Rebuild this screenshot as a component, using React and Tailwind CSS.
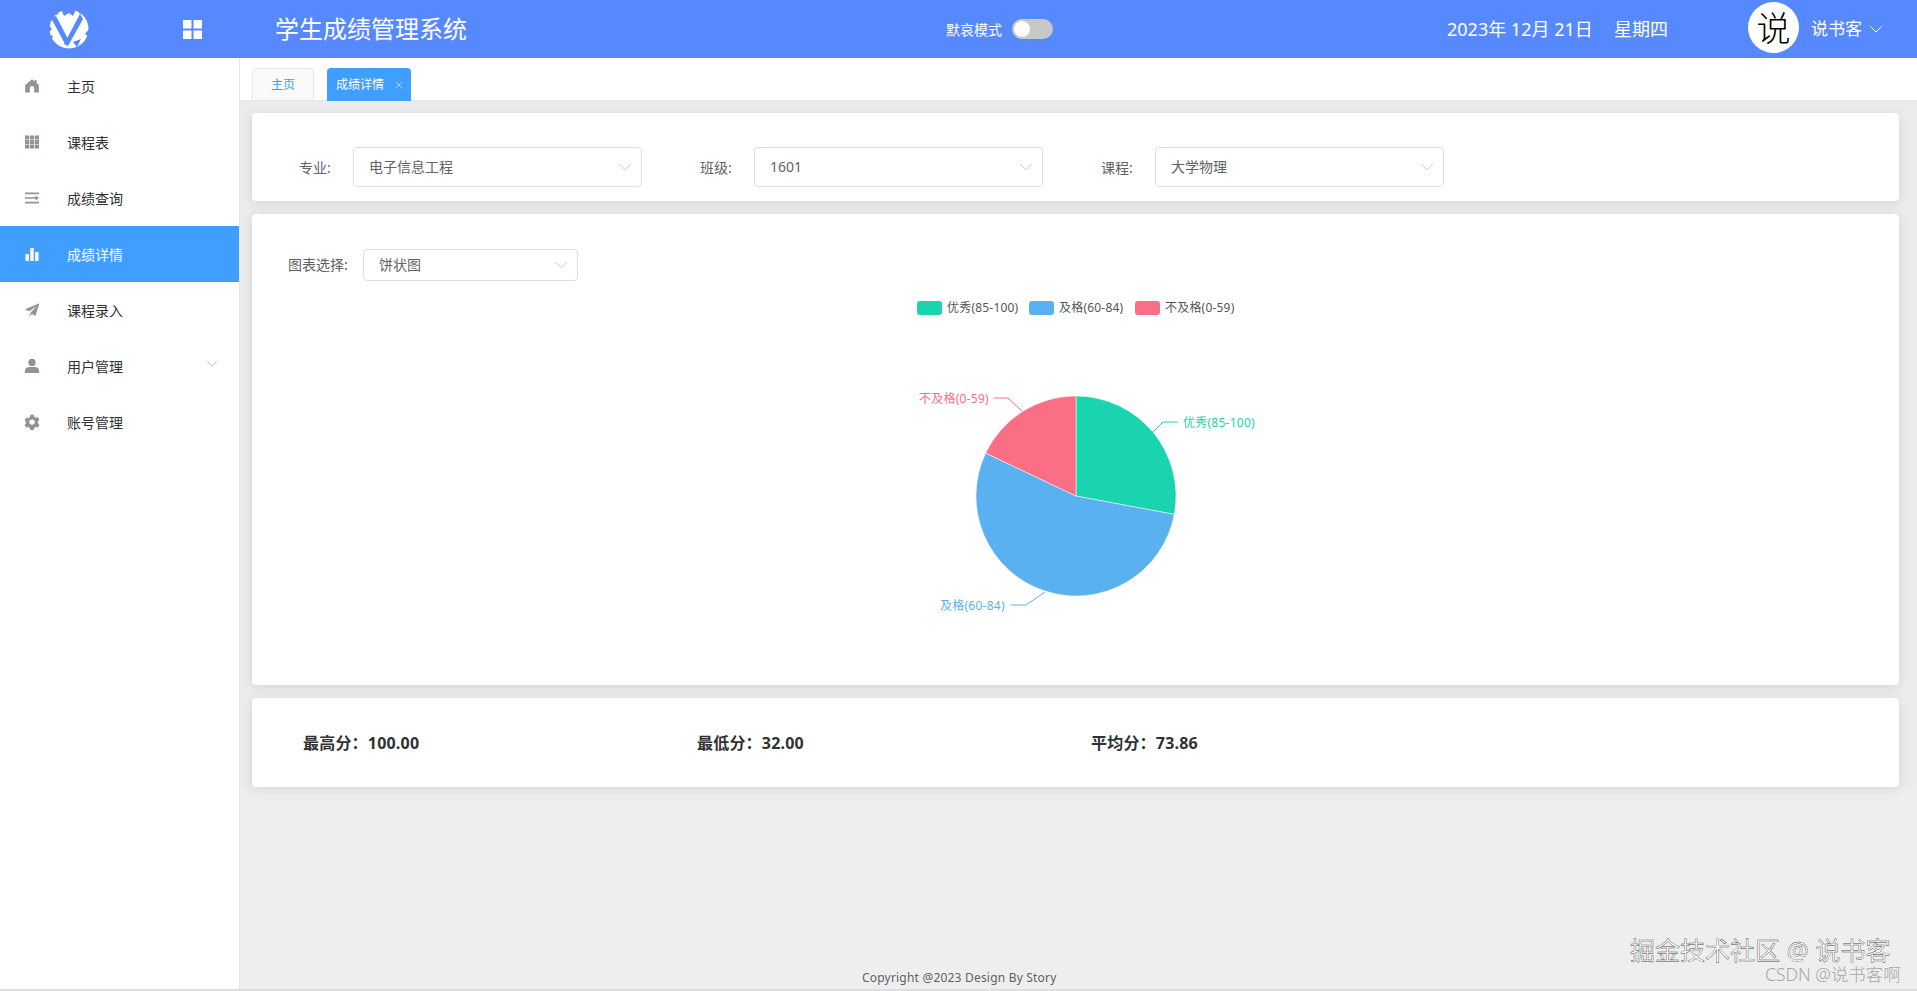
import React from 'react';
import { ChevronDown, X } from 'lucide-react';

const FONT = "font-['Noto_Sans','Noto_Sans_CJK_SC',sans-serif]";

const icons = {
  home: <path d="M8 1.2 1.2 7v7.6h4.6v-4.4a2.2 2.2 0 0 1 4.4 0v4.4h4.6V7L12.6 5V2h-1.8v1.5L8 1.2Z" />,
  grid: (
    <path d="M1 1.6h4.2v4H1zM5.9 1.6h4.2v4H5.9zM10.8 1.6H15v4h-4.2zM1 6.1h4.2v4H1zM5.9 6.1h4.2v4H5.9zM10.8 6.1H15v4h-4.2zM1 10.6h4.2v4H1zM5.9 10.6h4.2v4H5.9zM10.8 10.6H15v4h-4.2z" />
  ),
  list: (
    <path d="M1 2.6h14v1.6H1zM1 7.2h10.6V5.6L15 8l-3.4 2.4V8.8H1zM1 11.8h14v1.6H1z" />
  ),
  chart: <path d="M1.5 8h3.4v7H1.5zM6.3 2h3.4v13H6.3zM11.1 6h3.4v9h-3.4z" />,
  plane: <path d="M15.4 1.2 1 7.2l4.2 2.1 7.6-5.4-5.9 6.3v.1l-2 4.5 3.2-2.7 3.3 1.8 4-12.7Z" />,
  user: (
    <>
      <circle cx="8" cy="4.4" r="3.6" />
      <path d="M1 15v-2.4C1 10.2 3 9 5 9h6c2 0 4 1.2 4 3.6V15H1Z" />
    </>
  ),
  gear: (
    <path
      fillRule="evenodd"
      d="m6.3.8 3.4 0 .5 2 1.5.9 2-.6 1.7 3-1.5 1.4v1.8l1.5 1.4-1.7 3-2-.6-1.5.9-.5 2H6.3l-.5-2-1.5-.9-2 .6-1.7-3 1.5-1.4V8l-1.5-1.4 1.7-3 2 .6 1.5-.9.5-2ZM8 5.4a2.7 2.7 0 1 0 0 5.4 2.7 2.7 0 0 0 0-5.4Z"
    />
  ),
};

const menu = [
  ['home', '主页'],
  ['grid', '课程表'],
  ['list', '成绩查询'],
  ['chart', '成绩详情', true],
  ['plane', '课程录入'],
  ['user', '用户管理', false, true],
  ['gear', '账号管理'],
];

function Logo() {
  return (
    <svg viewBox="0 0 40 40" className="w-10 h-10 shrink-0">
      <circle cx="20" cy="20" r="19.5" fill="#fff" />
      <g fill="#5789fe">
        <path d="M2 9 7 7 19 30 16 35 Z" />
        <path d="M31 5 34 10 19 37 15 35 Z" />
        <path d="M12 0 27 0 24 7 20 4 15 7 Z" />
        <path d="M7 1 9 6 3 5 Z" />
        <path d="M32 0 30 5 37 4 Z" />
        <path d="M0 17 3 20 0 23 Z" />
        <path d="M0 26 4 27 2 32 Z" />
        <path d="M40 20 36 25 40 28 Z" />
        <path d="M24 33 32 30 28 38 Z" />
      </g>
    </svg>
  );
}

function Select({ value, className }) {
  return (
    <div className={`flex items-center justify-between bg-white border border-[#dcdfe6] rounded-[4px] pl-[15px] pr-[5px] text-[14px] text-[#606266] ${className}`}>
      <span className="mb-[2px]">{value}</span>
      <ChevronDown size={22} strokeWidth={0.8} className="text-[#b4b8bf]" />
    </div>
  );
}

function polar(deg, r = 100) {
  const a = ((deg - 90) * Math.PI) / 180;
  return [250 + r * Math.cos(a), 206 + r * Math.sin(a)];
}

function slice(from, to) {
  const [x1, y1] = polar(from);
  const [x2, y2] = polar(to);
  const large = to - from > 180 ? 1 : 0;
  return `M250 206 L${x1} ${y1} A100 100 0 ${large} 1 ${x2} ${y2} Z`;
}

function PieChart() {
  const legend = [
    [91, '#19d4ae', '优秀(85-100)', 121],
    [203, '#5ab1ef', '及格(60-84)', 233],
    [309, '#fa6e86', '不及格(0-59)', 339],
  ];
  return (
    <svg viewBox="0 0 500 394" className={`w-[500px] h-[394px] mt-[9px] mx-auto block ${FONT}`}>
      {legend.map(([x, color, label, tx]) => (
        <g key={label}>
          <rect x={x} y="11" width="25" height="14" rx="3" fill={color} />
          <text x={tx} y="22" fontSize="12" letterSpacing="0.2" fill="#555">{label}</text>
        </g>
      ))}
      <path d={slice(0, 100.6)} fill="#19d4ae" stroke="#fff" strokeWidth="0.5" />
      <path d={slice(100.6, 295.4)} fill="#5ab1ef" stroke="#fff" strokeWidth="0.5" />
      <path d={slice(295.4, 360)} fill="#fa6e86" stroke="#fff" strokeWidth="0.5" />
      <polyline points="327,142 337,132 352,132" fill="none" stroke="#19d4ae" strokeWidth="1" />
      <text x="357" y="137" fontSize="12" letterSpacing="0.25" fill="#19d4ae">优秀(85-100)</text>
      <polyline points="219,302 200,315 185,315" fill="none" stroke="#5ab1ef" strokeWidth="1" />
      <text x="114" y="320" fontSize="12" letterSpacing="0.25" fill="#5ab1ef">及格(60-84)</text>
      <polyline points="196,121 182,108 168,108" fill="none" stroke="#fa6e86" strokeWidth="1" />
      <text x="93" y="113" fontSize="12" letterSpacing="0.25" fill="#fa6e86">不及格(0-59)</text>
    </svg>
  );
}

const cardClass = 'bg-white rounded-[4px] shadow-[0_2px_12px_rgba(0,0,0,0.1)]';

export default function App() {
  return (
    <div className={`relative flex flex-col w-full h-[991px] overflow-hidden bg-[#eeeeee] border-b-2 border-[#dedede] ${FONT}`}>
      <header className="flex items-center h-[58px] shrink-0 bg-[#5789fe] text-white">
        <div className="pl-[49px]"><Logo /></div>
        <svg viewBox="0 0 19 19" className="w-[19px] h-[19px] ml-[94px] shrink-0" fill="#fff">
          <path d="M0 0h8.5v8.5H0zM10.5 0H19v8.5h-8.5zM0 10.5h8.5V19H0zM10.5 10.5H19V19h-8.5z" />
        </svg>
        <h1 className="ml-[73px] w-[192px] text-[24px] leading-none whitespace-nowrap font-normal">学生成绩管理系统</h1>
        <span className="ml-[479px] text-[14px] w-[56px] whitespace-nowrap">默哀模式</span>
        <div className="ml-[10px] flex items-center w-[41px] h-[20px] rounded-full bg-[#c8c8c8] p-[2px]">
          <div className="w-4 h-4 rounded-full bg-white" />
        </div>
        <div className="ml-[394px] w-[149px] text-[18px] whitespace-nowrap">2023年 12月 21日</div>
        <div className="ml-[18px] w-[54px] text-[18px] whitespace-nowrap">星期四</div>
        <div className="ml-[80px] flex items-center justify-center w-[51px] h-[51px] rounded-full bg-white text-black text-[34px] leading-none font-light mb-[3px]">说</div>
        <span className="ml-[12px] text-[17px] whitespace-nowrap">说书客</span>
        <ChevronDown size={24} strokeWidth={1} className="ml-[2px]" />
      </header>

      <div className="flex flex-1 min-h-0">
        <aside className="w-[240px] shrink-0 bg-white border-r border-[#e6e6e6]">
          {menu.map(([icon, label, active, arrow]) => (
            <div
              key={label}
              className={`flex items-center h-[56px] pl-[24px] text-[14px] ${active ? 'bg-[#409eff] text-white' : 'text-[#303133]'}`}
            >
              <svg viewBox="0 0 16 16" className={`w-4 h-4 shrink-0 ${active ? 'text-white' : 'text-[#909399]'}`} fill="currentColor">
                {icons[icon]}
              </svg>
              <span className="ml-[27px] flex-1">{label}</span>
              {arrow && <ChevronDown size={18} strokeWidth={0.9} className="mr-[18px] mb-[4px] text-[#909399]" />}
            </div>
          ))}
        </aside>

        <main className="flex flex-col flex-1 min-w-0">
          <div className="flex items-start gap-[13px] h-[43px] shrink-0 bg-white pl-[12px] pt-[10px] border-b border-[#e6e6e6]">
            <div className="flex items-center justify-center w-[62px] h-[33px] bg-[#fafafa] border border-[#e4e7ed] rounded-t-[4px] text-[12px] text-[#409eff]">主页</div>
            <div className="flex items-center w-[84px] h-[33px] bg-[#409eff] rounded-t-[4px] pl-[9px] text-[12px] text-white">
              <span>成绩详情</span>
              <X size={12} strokeWidth={1.2} className="ml-[9px]" />
            </div>
          </div>

          <div className="flex flex-col gap-[13px] pl-[12px] pr-[18px] pt-[12px] shrink-0 bg-[#ececec]">
            <section className={`${cardClass} flex items-center h-[88px] pl-[47px] pt-[20px]`}>
              {[
                ['专业:', '电子信息工程'],
                ['班级:', '1601'],
                ['课程:', '大学物理'],
              ].map(([label, value]) => (
                <div key={label} className="flex items-center w-[401px] shrink-0">
                  <span className="w-[54px] text-[14px] text-[#606266]">{label}</span>
                  <Select value={value} className="w-[289px] h-[40px]" />
                </div>
              ))}
            </section>

            <section className={`${cardClass} h-[471px] pt-[35px]`}>
              <div className="flex items-center pl-[36px]">
                <span className="w-[75px] text-[14px] text-[#606266] mb-[2px]">图表选择:</span>
                <Select value="饼状图" className="w-[215px] h-[32px]" />
              </div>
              <PieChart />
            </section>

            <section className={`${cardClass} flex items-center h-[89px] pl-[51px]`}>
              {['最高分：100.00', '最低分：32.00', '平均分：73.86'].map((t) => (
                <div key={t} className="w-[394px] shrink-0 text-[16px] font-bold tracking-[0.2px] text-[#303133]">{t}</div>
              ))}
            </section>
          </div>

          <footer className="mt-auto pb-[3px] pl-[622px] text-[12px] leading-[16px] tracking-[0.2px] text-[#606266] whitespace-nowrap">
            Copyright @2023 Design By Story
          </footer>
        </main>
      </div>

      <div className="absolute left-[1630px] top-[937px] text-[25px] leading-[26px] whitespace-nowrap text-white [-webkit-text-stroke:0.4px_#444]">
        掘金技术社区 @ 说书客
      </div>
      <div className="absolute left-[1765px] top-[964px] text-[17.5px] leading-[20px] font-light whitespace-nowrap text-[#a6a6a6]">
        CSDN @说书客啊
      </div>
    </div>
  );
}
